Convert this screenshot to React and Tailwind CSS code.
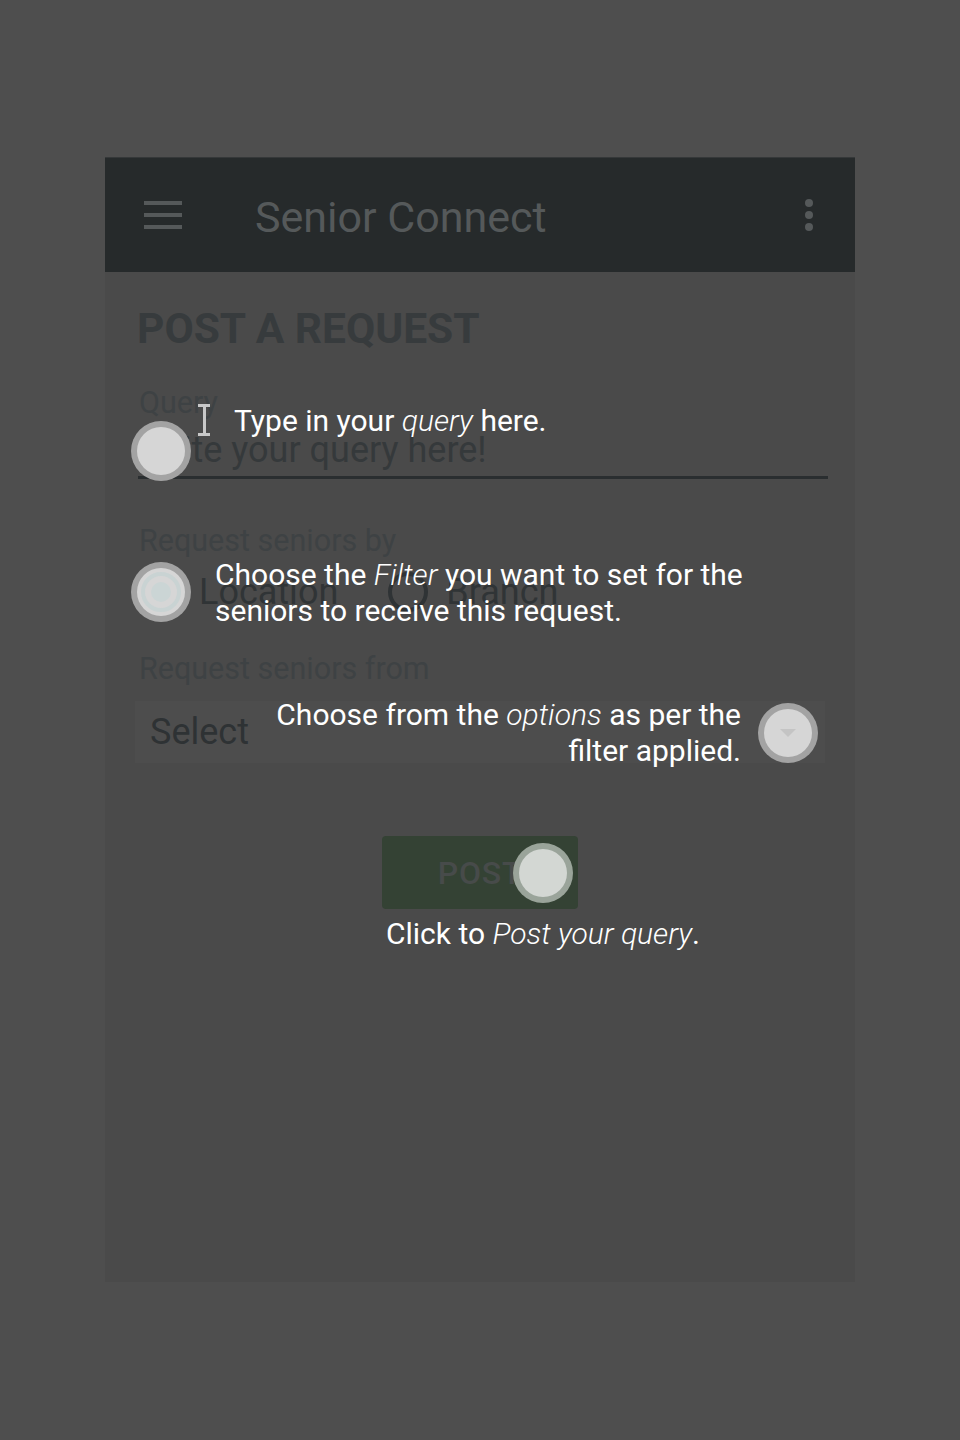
import React from 'react';

const Ring = ({ className = '', tone = 'gray', children }) => (
  <div
    className={`absolute w-[60px] h-[60px] rounded-full flex items-center justify-center ${
      tone === 'green' ? 'bg-[#9aa49a]' : 'bg-[#a3a3a3]'
    } ${className}`}
  >
    <div
      className={`w-[48px] h-[48px] rounded-full flex items-center justify-center ${
        tone === 'green' ? 'bg-[#d3d7d3]' : 'bg-[#d6d6d6]'
      }`}
    >
      {children}
    </div>
  </div>
);

const App = () => {
  return (
    <div
      className="min-h-[1440px] w-full bg-[#4e4e4e] pt-[157px] pl-[105px] relative"
      style={{ fontFamily: 'Roboto, "Noto Sans", sans-serif' }}
    >
      {/* phone frame */}
      <div className="w-[750px] h-[1125px] bg-[#4a4a4a] flex flex-col">
        <div className="h-[115px] bg-[#262a2b] border-t border-[#353839] flex items-center pl-[39px] pr-[42px]">
          <div className="flex flex-col gap-[8px] w-[38px]">
            <span className="block h-[4px] bg-[#55595a]" />
            <span className="block h-[4px] bg-[#55595a]" />
            <span className="block h-[4px] bg-[#55595a]" />
          </div>
          <h1 className="ml-[73px] text-[43px] leading-none text-[#55595a] flex-1 mt-[4px]">Senior Connect</h1>
          <div className="flex flex-col gap-[4px] items-center">
            <span className="block w-[8px] h-[8px] rounded-full bg-[#55595a]" />
            <span className="block w-[8px] h-[8px] rounded-full bg-[#55595a]" />
            <span className="block w-[8px] h-[8px] rounded-full bg-[#55595a]" />
          </div>
        </div>

        <div className="pl-[32px] pr-[27px] flex flex-col">
          <h2 className="mt-[36px] text-[42.5px] leading-none font-bold text-[#373b3d]">POST A REQUEST</h2>

          <label className="mt-[37px] ml-[2px] text-[30.5px] leading-none text-[#3e4244]">Query</label>
          <div className="mt-[14px] ml-[2px] text-[36px] leading-none text-[#35393b]">Write your query here!</div>
          <div className="mt-[8px] ml-[1px] h-[3px] bg-[#2a2e30]" />

          <label className="mt-[47px] ml-[2px] text-[30.5px] leading-none text-[#3e4244]">Request seniors by</label>
          <div className="mt-[13px] flex items-center h-[44px]">
            <span className="ml-[4px] w-[40px] h-[40px] rounded-full border-[4px] border-[#2f3335]" />
            <span className="ml-[18px] text-[36px] leading-none text-[#303436]">Location</span>
            <span className="ml-[50px] w-[40px] h-[40px] rounded-full border-[4px] border-[#2f3335]" />
            <span className="ml-[18px] text-[36px] leading-none text-[#303436]">Branch</span>
          </div>

          <label className="mt-[40px] ml-[2px] text-[30.5px] leading-none text-[#3e4244]">Request seniors from</label>
          <div className="mt-[17px] -ml-[2px] mr-[3px] h-[62px] bg-[#4d4d4d] flex items-center pl-[15px]">
            <span className="text-[36px] leading-none text-[#2e3234]">Select</span>
          </div>

          <div className="mt-[73px] flex">
            <button className="ml-[245px] w-[196px] h-[73px] rounded-[4px] bg-[#344234] text-[32px] font-medium text-[#474b4a] tracking-wide">
              POST
            </button>
          </div>
        </div>
      </div>

      {/* tutorial overlay */}
      <Ring className="left-[131px] top-[421px]" />
      <div className="absolute left-[198px] top-[404px] w-[12px] h-[32px] flex flex-col items-center">
        <span className="block w-[12px] h-[3px] bg-[#c8c8c8]" />
        <span className="block w-[3px] flex-1 bg-[#c8c8c8]" />
        <span className="block w-[12px] h-[3px] bg-[#c8c8c8]" />
      </div>
      <p className="absolute left-[234px] top-[403px] text-[30px] leading-[36px] text-white">
        Type in your <em className="font-light">query</em> here.
      </p>

      <Ring className="left-[131px] top-[562px]">
        <div className="w-[40px] h-[40px] rounded-full border-[4px] border-[#c9d3d3] flex items-center justify-center">
          <div className="w-[20px] h-[20px] rounded-full bg-[#cbd5d5]" />
        </div>
      </Ring>
      <p className="absolute left-[215px] top-[557px] text-[30px] leading-[36px] text-white">
        Choose the <em className="font-light">Filter</em> you want to set for the
        <br />
        seniors to receive this request.
      </p>

      <p className="absolute right-[219px] top-[697px] text-[30px] leading-[36px] text-white text-right">
        Choose from the <em className="font-light">options</em> as per the
        <br />
        filter applied.
      </p>
      <Ring className="left-[758px] top-[703px]">
        <span className="block w-0 h-0 border-l-[8px] border-r-[8px] border-t-[8px] border-l-transparent border-r-transparent border-t-[#c4c4c4]" />
      </Ring>

      <Ring tone="green" className="left-[513px] top-[843px]" />
      <p className="absolute left-[386px] top-[916px] text-[30px] leading-[36px] text-white">
        Click to <em className="font-light">Post your query</em>.
      </p>
    </div>
  );
};

export default App;
